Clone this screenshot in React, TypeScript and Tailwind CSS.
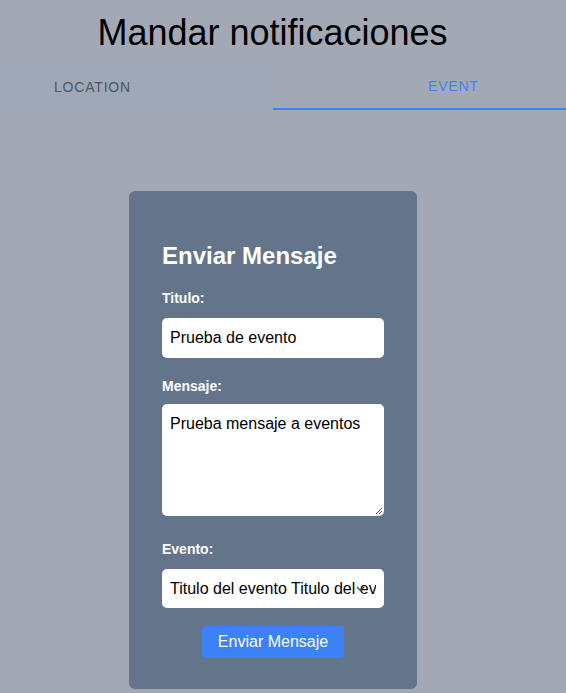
import React from 'react';

export default function App() {
  return (
    <div className="min-h-[693px] w-[566px] bg-[#a3a9b4] font-['Liberation_Sans',Arial,sans-serif]">
      <h1 className="pt-[12px] pr-[21px] text-center text-[36px] leading-[42px] text-black">
        Mandar notificaciones
      </h1>

      {/* Tabs */}
      <div className="mt-[11px] flex h-[45px]">
        <div className="flex w-[273px] items-center bg-[#9ea8b8] pl-[54px] text-[14px] tracking-[0.8px] text-[#4b5563]">
          LOCATION
        </div>
        <div className="flex flex-1 items-center border-b-2 border-[#3b82f6] pl-[155px] text-[14px] tracking-[0.8px] text-[#3b82f6]">
          EVENT
        </div>
      </div>

      {/* Card */}
      <div className="mt-[81px] ml-[129px] w-[288px] rounded-md bg-[#64748b] px-[33px] pt-[51px] pb-[31px] text-white">
        <h2 className="text-[24px] font-bold leading-[28px]">Enviar Mensaje</h2>

        <label className="mt-[20px] block text-[14px] font-bold leading-[16px]">Titulo:</label>
        <div className="mt-[12px] flex h-[40px] items-center rounded-[5px] bg-white px-[8px] text-[16px] text-black">
          Prueba de evento
        </div>

        <label className="mt-[20px] block text-[14px] font-bold leading-[16px]">Mensaje:</label>
        <div className="relative mt-[10px] h-[112px] rounded-[5px] bg-white px-[8px] pt-[10px] text-[16px] leading-[20px] text-black">
          Prueba mensaje a eventos
          <svg className="absolute right-[1px] bottom-[1px]" width="9" height="9" viewBox="0 0 9 9">
            <path d="M8 2 L2 8 M8 5 L5 8" stroke="#555" strokeWidth="1" />
          </svg>
        </div>

        <label className="mt-[25px] block text-[14px] font-bold leading-[16px]">Evento:</label>
        <div className="relative mt-[12px] flex h-[39px] items-center rounded-[5px] bg-white pl-[8px] text-[16px] text-black">
          <span className="block w-[206px] overflow-hidden whitespace-nowrap">Titulo del evento Titulo del ev</span>
          <svg className="absolute left-[194px] top-[17px] z-10" width="9" height="6" viewBox="0 0 9 6">
            <path d="M1 1 L4.5 4.5 L8 1" stroke="#444" strokeWidth="1.3" fill="none" />
          </svg>
        </div>

        <div className="mt-[18px] flex justify-center">
          <button className="h-[32px] w-[142px] rounded-[3px] bg-[#3b82f6] text-[16px] text-white">
            Enviar Mensaje
          </button>
        </div>
      </div>
    </div>
  );
}
